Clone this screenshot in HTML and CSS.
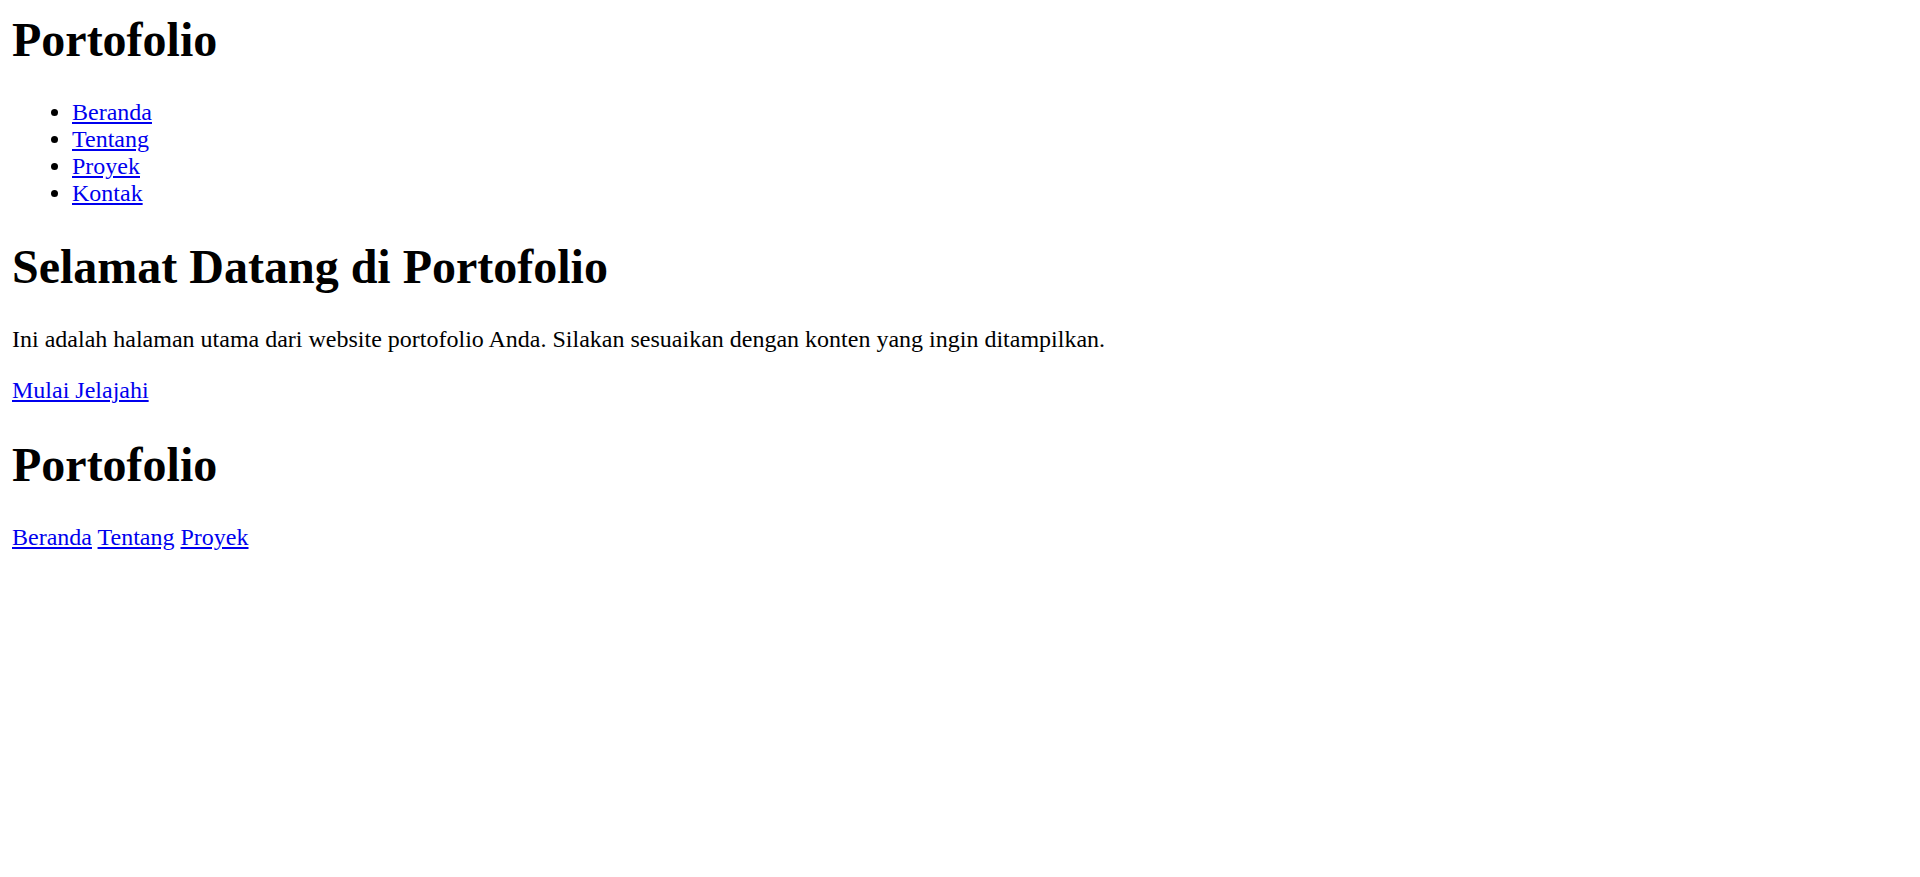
FILE: index.html
```html
<!DOCTYPE html>
<html lang="id">
<head>
<meta charset="utf-8">
<title>Portofolio</title>
<link rel="stylesheet" href="styles.css">
</head>
<body class="page">
<header class="site-header">
  <h1 class="title title-first">Portofolio</h1>
  <nav class="main-nav">
    <ul class="nav-list">
      <li class="nav-item"><a class="link" href="#beranda">Beranda</a></li>
      <li class="nav-item"><a class="link" href="#tentang">Tentang</a></li>
      <li class="nav-item"><a class="link" href="#proyek">Proyek</a></li>
      <li class="nav-item"><a class="link" href="#kontak">Kontak</a></li>
    </ul>
  </nav>
</header>
<main class="hero">
  <h1 class="title">Selamat Datang di Portofolio</h1>
  <p class="text">Ini adalah halaman utama dari website portofolio Anda. Silakan sesuaikan dengan konten yang ingin ditampilkan.</p>
  <p class="text"><a class="link" href="#jelajahi">Mulai Jelajahi</a></p>
</main>
<footer class="site-footer">
  <h1 class="title">Portofolio</h1>
  <p class="text"><a class="link" href="#beranda">Beranda</a> <a class="link" href="#tentang">Tentang</a> <a class="link" href="#proyek">Proyek</a></p>
</footer>
</body>
</html>
```
FILE: styles.css
```css
html {
  background: #ffffff;
}
.page {
  margin: 12px;
  font-family: "Liberation Serif", "Times New Roman", serif;
  font-size: 24px;
  color: #000000;
}
.title {
  font-size: 48px;
  font-weight: bold;
  margin: 32.16px 0;
}
.title-first {
  margin-top: 0;
}
.nav-list {
  margin: 24px 0;
  padding-left: 60px;
  list-style: disc;
}
.text {
  margin: 24px 0;
}
.link {
  color: #0000ee;
  text-decoration: underline;
}
```
